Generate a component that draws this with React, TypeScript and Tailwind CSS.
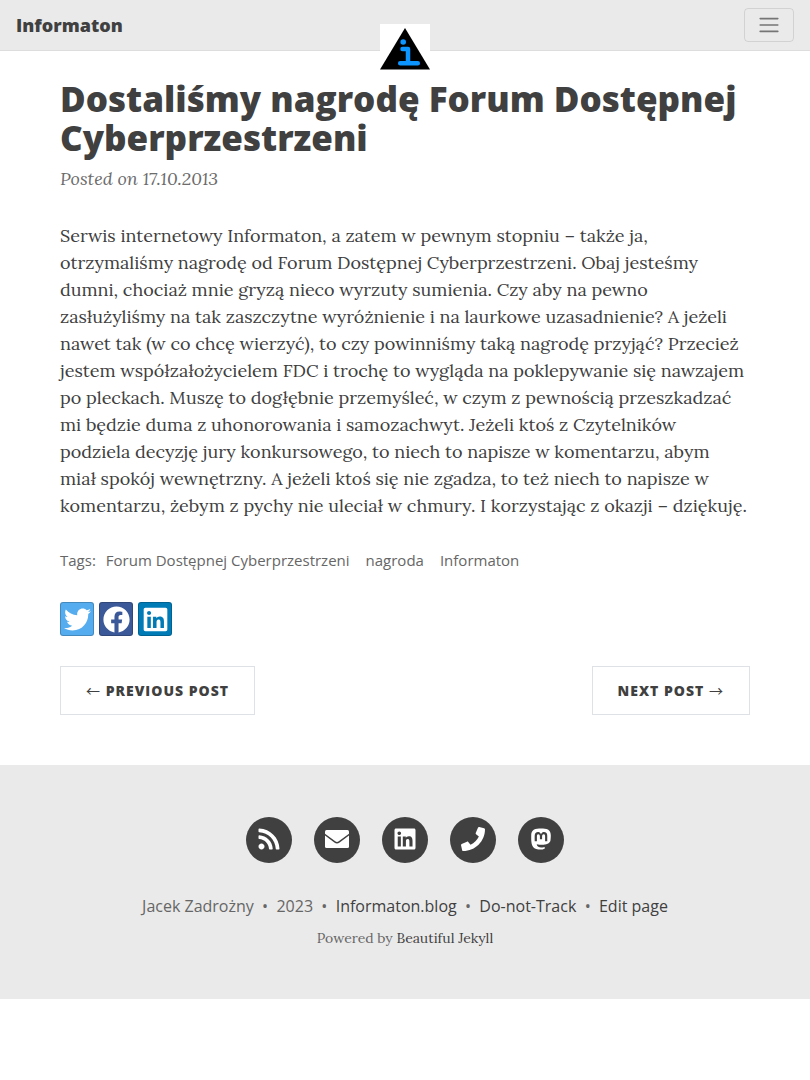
import { FaRss, FaLinkedin, FaPhone, FaMastodon, FaTwitter, FaFacebook } from "react-icons/fa";

const paragraph =
  "Serwis internetowy Informaton, a zatem w pewnym stopniu – także ja, otrzymaliśmy nagrodę od Forum Dostępnej Cyberprzestrzeni. Obaj jesteśmy dumni, chociaż mnie gryzą nieco wyrzuty sumienia. Czy aby na pewno zasłużyliśmy na tak zaszczytne wyróżnienie i na laurkowe uzasadnienie? A jeżeli nawet tak (w co chcę wierzyć), to czy powinniśmy taką nagrodę przyjąć? Przecież jestem współzałożycielem FDC i trochę to wygląda na poklepywanie się nawzajem po pleckach. Muszę to dogłębnie przemyśleć, w czym z pewnością przeszkadzać mi będzie duma z uhonorowania i samozachwyt. Jeżeli ktoś z Czytelników podziela decyzję jury konkursowego, to niech to napisze w komentarzu, abym miał spokój wewnętrzny. A jeżeli ktoś się nie zgadza, to też niech to napisze w komentarzu, żebym z pychy nie uleciał w chmury. I korzystając z okazji – dziękuję.";

const tags = ["Forum Dostępnej Cyberprzestrzeni", "nagroda", "Informaton"];

const shares = [
  { label: "Twitter", Icon: FaTwitter, style: "bg-[#55acee]" },
  { label: "Facebook", Icon: FaFacebook, style: "bg-[#3b5998]" },
  { label: "LinkedIn", Icon: FaLinkedin, style: "bg-[#007bb6]" },
];

function Envelope({ className }: { className?: string }) {
  return (
    <svg viewBox="0 0 24 24" className={className}>
      <rect x="0" y="3" width="24" height="18" rx="1.500" fill="currentColor" />
      <path d="M-.5 7.300 9.800 14.900Q12 16.500 14.200 14.900L24.500 7.300" fill="none" stroke="#404040" strokeWidth="1.500" />
    </svg>
  );
}

const contacts = [
  { label: "RSS", Icon: FaRss },
  { label: "Email", Icon: Envelope },
  { label: "LinkedIn", Icon: FaLinkedin },
  { label: "Phone", Icon: FaPhone },
  { label: "Mastodon", Icon: FaMastodon },
];

const footerLinks = ["Informaton.blog", "Do-not-Track", "Edit page"];

function Arrow({ children }: { children: string }) {
  return <span className="font-['Noto_Sans_CJK_JP',sans-serif] leading-none font-normal">{children}</span>;
}

export default function App() {
  return (
    <div className="bg-white font-['Lora','Noto_Serif','Liberation_Serif',serif] text-lg text-[#404040]">
      <nav className="relative flex items-center justify-between border-b border-[#dddddd] bg-[#eaeaea] px-4 py-2 font-['Open_Sans',sans-serif]">
        <a href="#" className="text-lg leading-7 font-extrabold">Informaton</a>
        <button aria-label="Toggle navigation" className="flex h-[34px] w-[50px] items-center justify-center rounded border border-black/10">
          <svg viewBox="0 0 30 30" className="size-6" stroke="rgba(0,0,0,0.5)" strokeWidth="2" strokeLinecap="round">
            <path d="M4 7h22M4 15h22M4 23h22" />
          </svg>
        </button>
        <a href="#" aria-label="Home" className="absolute top-6 left-1/2 size-[50px] -translate-x-1/2 bg-white">
          <svg viewBox="0 0 50 50" className="size-full">
            <path d="M25 4 50 45.500H0Z" fill="#000" />
            <circle cx="23.200" cy="18" r="2.800" fill="#0d95ff" />
            <path d="M22.500 25h5.500v14M20.200 39.200h17.600" fill="none" stroke="#0d95ff" strokeWidth="4.500" strokeLinecap="round" strokeLinejoin="round" />
          </svg>
        </a>
      </nav>

      <main className="mx-auto max-w-[690px] pt-7">
        <h1 className="font-['Open_Sans',sans-serif] text-[35px] leading-[39px] font-extrabold">
          Dostaliśmy nagrodę Forum Dostępnej Cyberprzestrzeni
        </h1>
        <p className="mt-2 leading-[27px] text-[#6c6c6c] italic">Posted on 17.10.2013</p>
        <p className="mt-[30px] leading-[27px]">{paragraph}</p>
        <div className="mt-[30px] flex gap-[10px] font-['Open_Sans',sans-serif] text-[15px] leading-[23px] text-[#666666]">
          <span>Tags:</span>
          <div className="flex gap-4">
            {tags.map((tag) => <a key={tag} href="#">{tag}</a>)}
          </div>
        </div>
        <div className="mt-[30px] flex gap-[5px]">
          {shares.map(({ label, Icon, style }) => (
            <a key={label} href="#" aria-label={label} className={`flex size-[34px] items-center justify-center rounded-[3px] border border-black/20 text-white ${style}`}>
              <Icon className="size-[27px]" />
            </a>
          ))}
        </div>
        <div className="mt-[30px] flex justify-between font-['Open_Sans',sans-serif] text-sm leading-[21px] font-extrabold tracking-[1px] uppercase">
          <a href="#" className="border border-[#dee2e6] px-[25px] py-[13px]"><Arrow>←</Arrow> Previous Post</a>
          <a href="#" className="border border-[#dee2e6] px-[25px] py-[13px]">Next Post <Arrow>→</Arrow></a>
        </div>
      </main>

      <footer className="mt-[50px] border-t border-[#eaeaea] bg-[#eaeaea] pt-[51px] pb-[50px] text-center font-['Open_Sans',sans-serif]">
        <div className="flex justify-center gap-[22px]">
          {contacts.map(({ label, Icon }) => (
            <a key={label} href="#" aria-label={label} className="flex size-[46px] items-center justify-center rounded-full bg-[#404040] pb-0.5 text-white">
              <Icon className="size-6" />
            </a>
          ))}
        </div>
        <p className="mt-[31px] text-base leading-6 text-[#666666]">
          Jacek Zadrożny &nbsp;•&nbsp; 2023
          {footerLinks.map((link) => (
            <span key={link}> &nbsp;•&nbsp; <a href="#" className="text-[#404040]">{link}</a></span>
          ))}
        </p>
        <p className="mt-[10px] font-['Lora','Noto_Serif','Liberation_Serif',serif] text-sm leading-[21px] text-[#666666]">
          Powered by <a href="#" className="text-[#404040]">Beautiful Jekyll</a>
        </p>
      </footer>
    </div>
  );
}
